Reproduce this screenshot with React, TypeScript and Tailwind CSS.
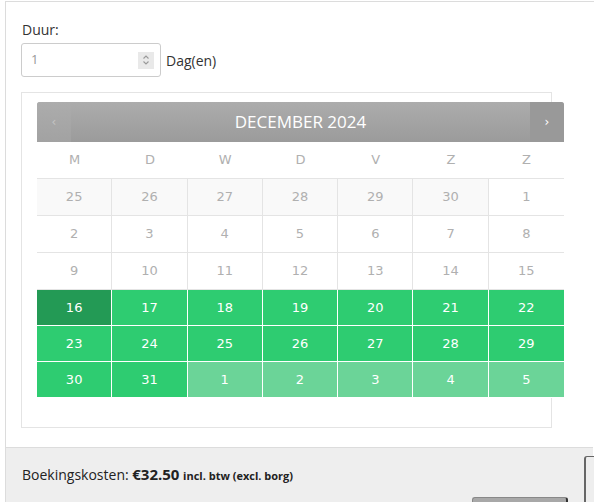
import React from 'react'

type Day = { n: number; kind: 'prev' | 'off' | 'sel' | 'on' | 'next' }

const weeks: Day[][] = [
  [25, 26, 27, 28, 29, 30].map((n) => ({ n, kind: 'prev' as const })).concat([{ n: 1, kind: 'off' }]),
  [2, 3, 4, 5, 6, 7, 8].map((n) => ({ n, kind: 'off' as const })),
  [9, 10, 11, 12, 13, 14, 15].map((n) => ({ n, kind: 'off' as const })),
  [16, 17, 18, 19, 20, 21, 22].map((n) => ({ n, kind: n === 16 ? ('sel' as const) : ('on' as const) })),
  [23, 24, 25, 26, 27, 28, 29].map((n) => ({ n, kind: 'on' as const })),
  [{ n: 30, kind: 'on' }, { n: 31, kind: 'on' }, ...[1, 2, 3, 4, 5].map((n) => ({ n, kind: 'next' as const }))],
]

const dayNames = ['M', 'D', 'W', 'D', 'V', 'Z', 'Z']

const cellStyle = {
  prev: 'bg-[#f9f9f9] text-[#b0b0b0] border-[#e4e4e4]',
  off: 'bg-white text-[#b0b0b0] border-[#e4e4e4]',
  sel: 'bg-[#239a55] text-white border-white',
  on: 'bg-[#2ecc71] text-white border-white',
  next: 'bg-[#6bd498] text-white border-white',
}

const Calendar = () => (
  <div className="w-[527px] font-['DejaVu_Sans',Verdana,sans-serif] text-[13px]">
    {/* header */}
    <div className="h-[40px] flex rounded-t-[3px] overflow-hidden bg-gradient-to-b from-[#acacac] to-[#9b9b9b]">
      <div className="w-[34px] flex items-center justify-center text-[#c4c4c4] text-[12px] bg-gradient-to-b from-[#acacac] to-[#a2a2a2]">‹</div>
      <div className="flex-1 flex items-center justify-center text-white text-[17px] font-['Open_Sans',sans-serif]">DECEMBER 2024</div>
      <div className="w-[34px] flex items-center justify-center text-white text-[12px] bg-[#999]">›</div>
    </div>
    {/* day names */}
    <div className="grid grid-cols-7 h-[37px] bg-white border-b border-[#e4e4e4]">
      {dayNames.map((d, i) => (
        <div key={i} className="flex items-center justify-center text-[#b0b0b0]">{d}</div>
      ))}
    </div>
    {weeks.map((w, wi) => (
      <div key={wi} className={`grid grid-cols-7 ${wi < 3 ? 'h-[37px]' : 'h-[36px]'}`}>
        {w.map((d, di) => (
          <div
            key={di}
            className={`flex items-center justify-center border-b ${di < 6 ? 'border-r' : ''} ${cellStyle[d.kind]}`}
          >
            {d.n}
          </div>
        ))}
      </div>
    ))}
  </div>
)

export default function App() {
  return (
    <div className="relative w-[594px] h-[502px] overflow-hidden bg-white font-['Open_Sans',sans-serif] text-[#333]">
      <div className="ml-[5px] mt-[1px] h-[501px] flex flex-col border-l border-t border-[#dcdcdc]">
        <div className="shrink-0 pl-[15px] pt-[18px] h-[445px]">
          <div className="text-[14px] leading-[20px] pl-px">Duur:</div>
          <div className="mt-[3px] flex items-center gap-[5px]">
            <div className="w-[140px] h-[34px] border border-[#ccc] rounded-[3px] flex items-center pl-[9px] pr-[6px] text-[13px] text-[#999]">
              <span className="flex-1">1</span>
              <span className="w-[16px] h-[17px] bg-[#e9e9e9] flex items-center justify-center">
                <svg width="8" height="12" viewBox="0 0 8 12" fill="none" stroke="#999" strokeWidth="1.1">
                  <path d="M1.5 4.5 L4 2 L6.5 4.5" />
                  <path d="M1.5 7.5 L4 10 L6.5 7.5" />
                </svg>
              </span>
            </div>
            <span className="text-[14px]">Dag(en)</span>
          </div>
          <div className="mt-[15px] w-[531px] h-[336px] border border-[#e4e4e4] pl-[15px] pt-[9px]">
            <Calendar />
          </div>
        </div>
        <div className="shrink-0 h-[60px] bg-[#eee] border-t border-[#dcdcdc] w-[587px] flex flex-col pt-[16px] pl-[16px]">
          <div className="text-[14px] leading-[20px] text-[#222]">
            Boekingskosten: <span className="font-bold text-[15px]">€32.50</span>{' '}
            <span className="font-bold text-[11px]">incl. btw (excl. borg)</span>
          </div>
          <div className="mt-[11px] ml-[450px] w-[96px] h-[20px] shrink-0 bg-[#a8a8a8] border-t border-l border-[#888] border-r-2 border-r-[#333] rounded-t-[3px]" />
        </div>
      </div>
      <div className="absolute left-[584px] top-[456px] w-[12px] h-[50px] border-l-2 border-t border-[#666] rounded-tl-[3px] bg-[#eee]" />
    </div>
  )
}
